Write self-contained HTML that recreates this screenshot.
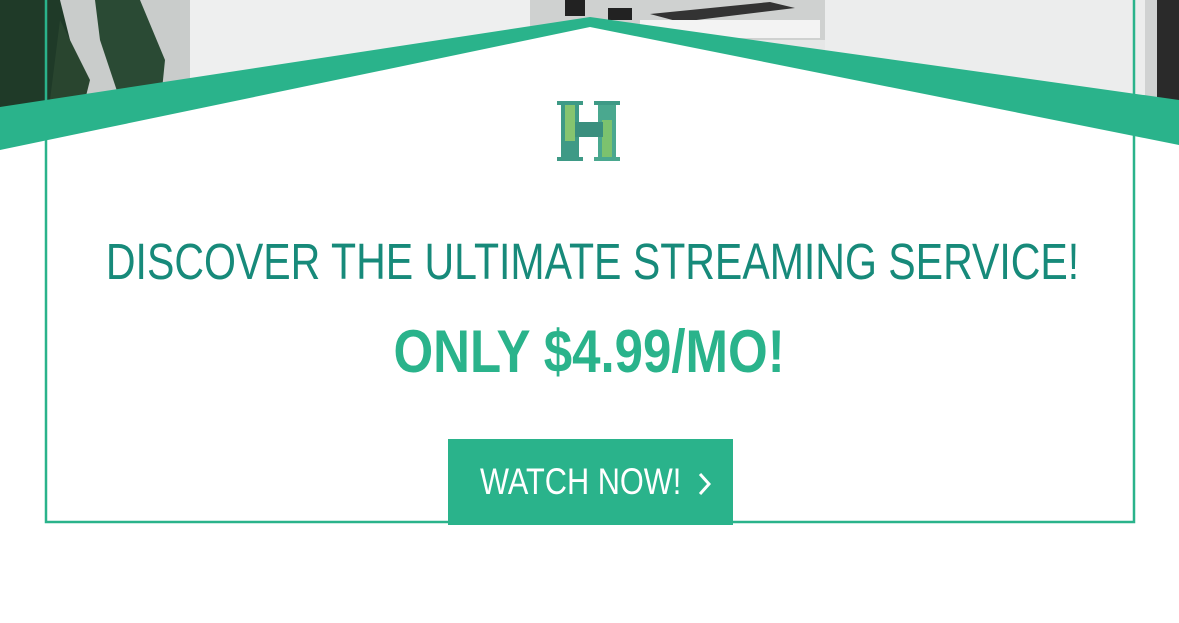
<!DOCTYPE html>
<html><head><style>
html,body{margin:0;padding:0;width:1179px;height:623px;overflow:hidden;background:#fff;font-family:"Liberation Sans",sans-serif;}
.abs{position:absolute}
.t1{left:-12px;width:1179px;top:234px;text-align:center;font-size:51px;color:#178a7a;white-space:nowrap;line-height:56px}
.t2{left:0;width:1179px;top:320px;text-align:center;font-size:60px;font-weight:bold;color:#2ab38b;white-space:nowrap;line-height:64px}
.t1 span,.t2 span{display:inline-block}
.t1 span{transform:scaleX(0.805)}
.t2 span{transform:scaleX(0.85)}
.btn{left:448px;top:439px;width:285px;height:86px;background:#2ab38b;color:#fff;font-size:37px;line-height:86px;white-space:nowrap}
</style></head><body>
<svg class="abs" style="left:0;top:0" width="1179" height="623">
  <rect x="0" y="0" width="1179" height="160" fill="#e6e7e7"/>
  <rect x="0" y="0" width="190" height="160" fill="#c9cccb"/>
  <path d="M0 0 L60 0 L70 40 L50 110 L0 130Z" fill="#1f3a28"/>
  <path d="M95 0 L140 0 L165 60 L160 110 L120 100 L100 40Z" fill="#2a4a34"/>
  <path d="M60 20 L90 80 L80 120 L50 100Z" fill="#29452f"/>
  <rect x="190" y="0" width="340" height="160" fill="#eeefef"/>
  <rect x="530" y="0" width="295" height="40" fill="#cfd1d0"/>
  <rect x="565" y="0" width="20" height="16" fill="#222"/>
  <rect x="608" y="8" width="24" height="12" fill="#222"/>
  <path d="M650 14 L770 2 L795 8 L680 22Z" fill="#333"/>
  <rect x="640" y="20" width="180" height="18" fill="#f3f3f3"/>
  <rect x="825" y="0" width="320" height="160" fill="#eceded"/>
  <rect x="1145" y="0" width="12" height="160" fill="#d0d2d2"/>
  <rect x="1157" y="0" width="22" height="160" fill="#2a2a2a"/>
  <path d="M0 107 L590 17 L1179 100 L1179 160 L0 160Z" fill="#2ab38b"/>
  <path d="M0 150 L590 27 L1179 145 L1179 623 L0 623Z" fill="#fff"/>
  <path d="M46 0 L46 522 L1134 522 L1134 0" fill="none" stroke="#2ab38b" stroke-width="2.5"/>
  <g>
    <rect x="561" y="101" width="18" height="60" fill="#3e9a86"/>
    <rect x="598" y="101" width="18" height="60" fill="#4aa88f"/>
    <rect x="565" y="101" width="10" height="40" fill="#86c46f"/>
    <rect x="602" y="120" width="10" height="40" fill="#7cc26e"/>
    <rect x="575" y="122" width="28" height="15" fill="#3a8f7e"/>
    <rect x="557" y="101" width="26" height="4" fill="#3e9a86"/>
    <rect x="594" y="101" width="26" height="4" fill="#3e9a86"/>
    <rect x="557" y="157" width="26" height="4" fill="#3e9a86"/>
    <rect x="594" y="157" width="26" height="4" fill="#4aa88f"/>
  </g>
</svg>
<div class="abs t1"><span>DISCOVER THE ULTIMATE STREAMING SERVICE!</span></div>
<div class="abs t2"><span>ONLY $4.99/MO!</span></div>
<div class="abs btn"><span style="position:absolute;left:32px;transform:scaleX(0.83);transform-origin:left center;display:inline-block">WATCH NOW!</span>
<svg style="position:absolute;left:249px;top:33px" width="16" height="24"><path d="M3 2 L12 12 L3 22" fill="none" stroke="#fff" stroke-width="3"/></svg></div>
</body></html>
